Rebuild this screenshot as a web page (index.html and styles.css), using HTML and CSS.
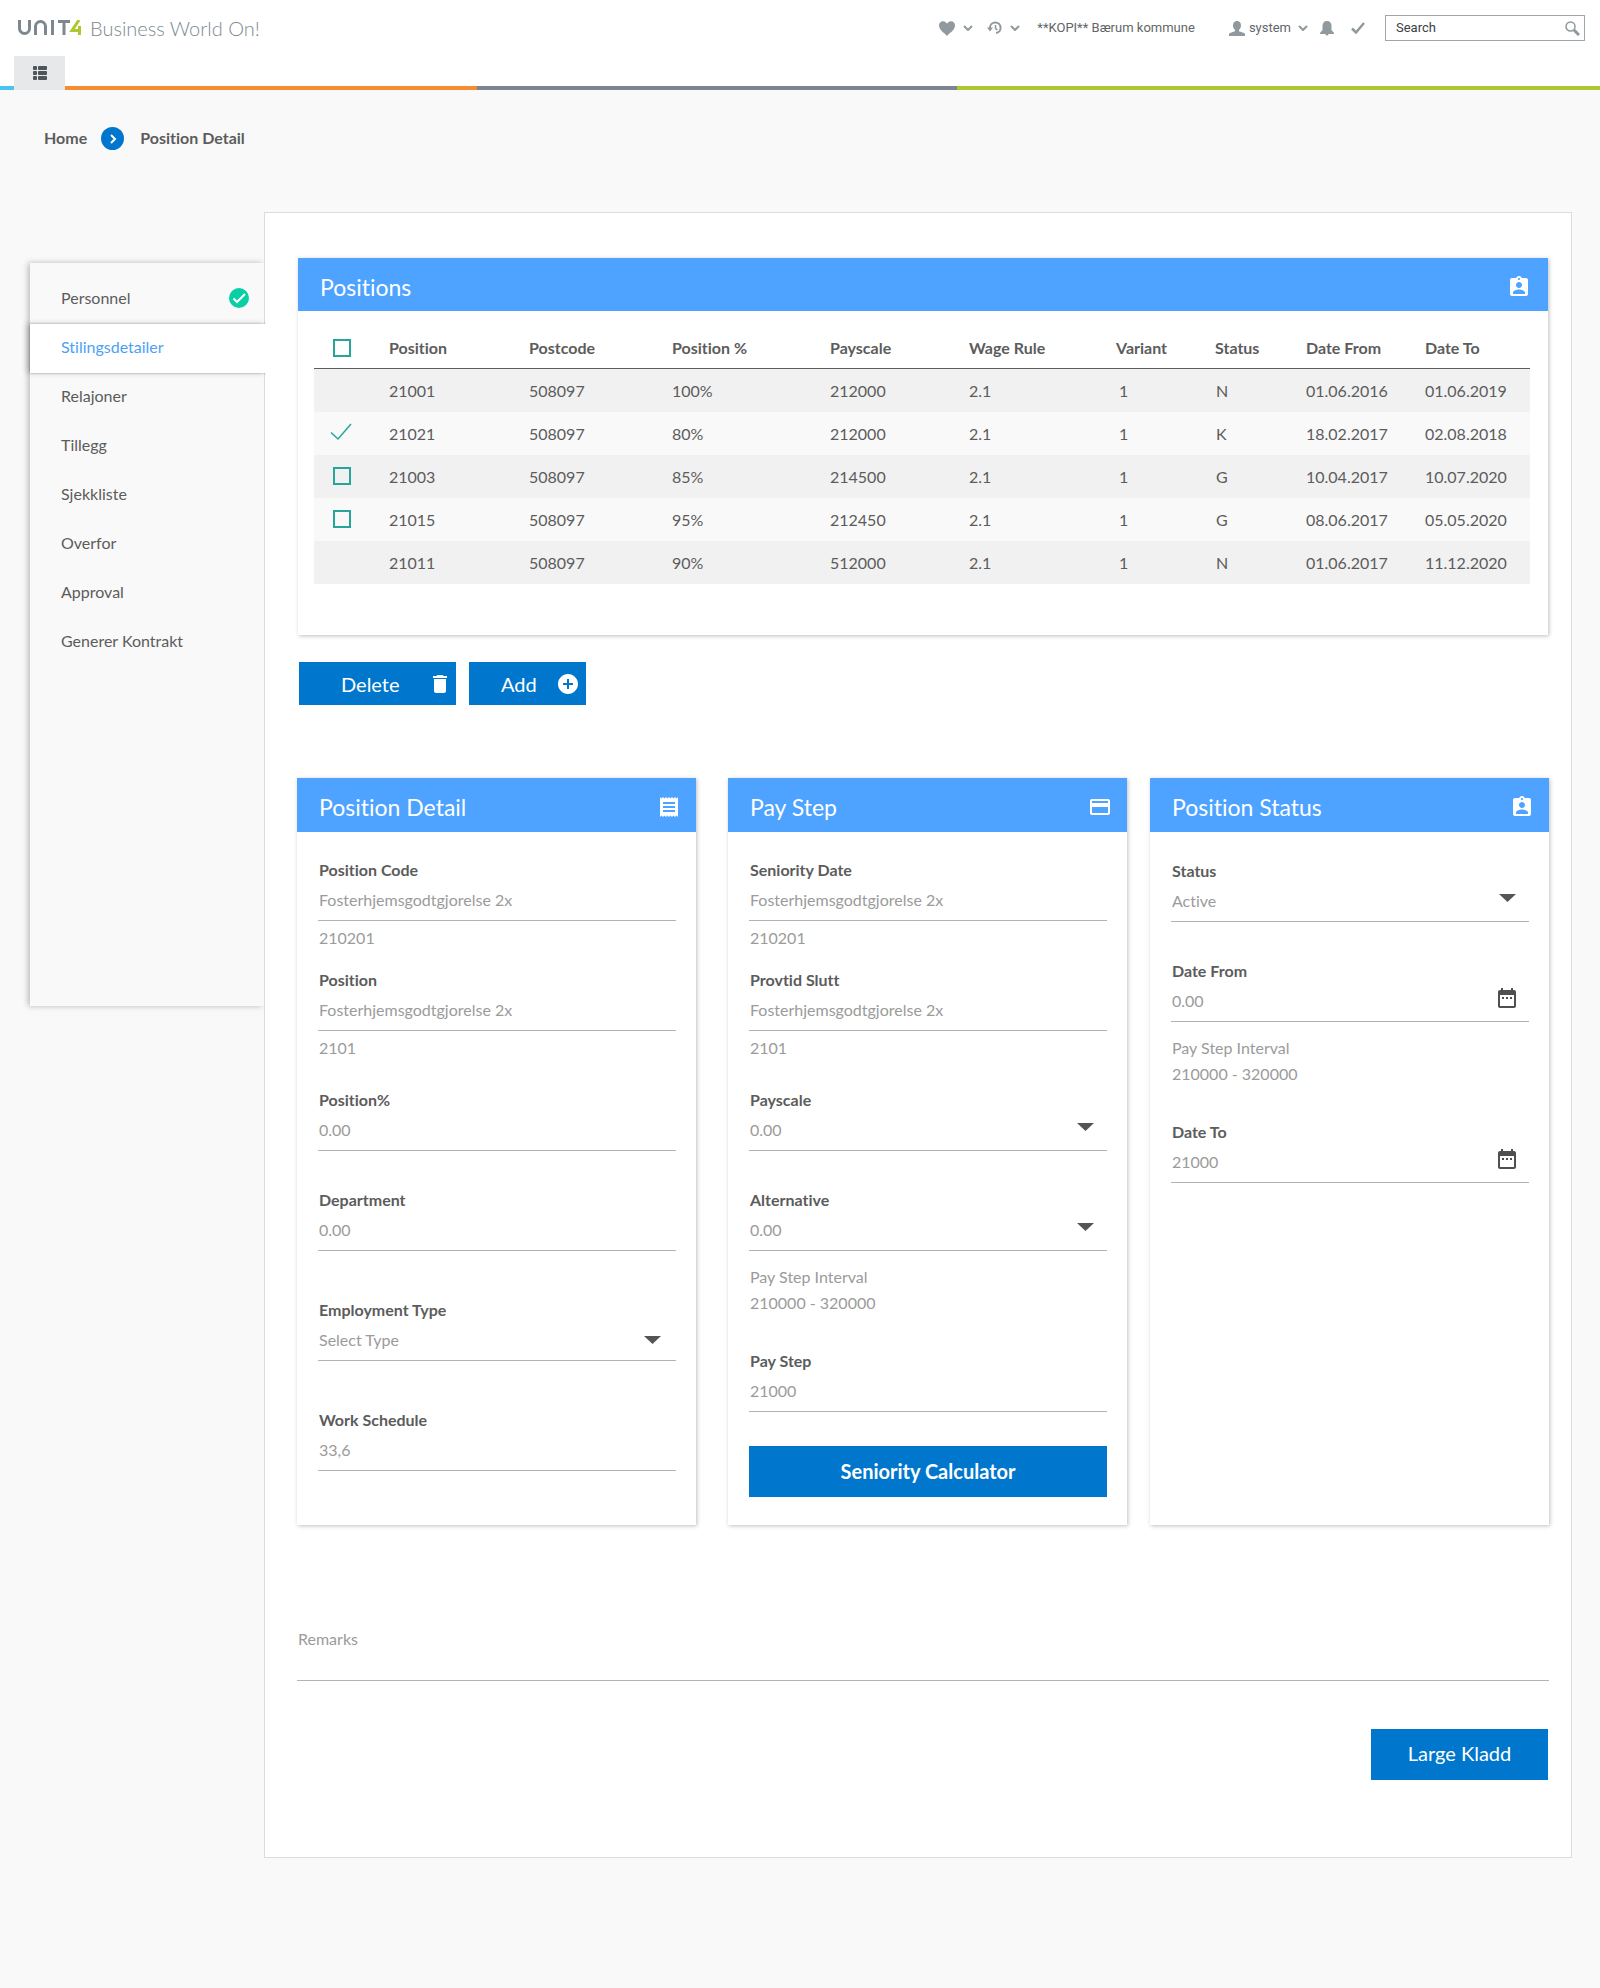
FILE: index.html
```html
<!DOCTYPE html>
<html lang="en">
<head>
<meta charset="utf-8">
<title>Position Detail - Business World On!</title>
<meta name="viewport" content="width=device-width, initial-scale=1">
<link rel="stylesheet" href="styles.css">
</head>
<body>
<svg class="sprite" aria-hidden="true">
  <symbol id="chevron" viewBox="0 0 10 6"><path d="M1 1l4 4 4-4" fill="none" stroke="currentColor" stroke-width="2"/></symbol>
  <symbol id="arrow" viewBox="0 0 17 8"><path d="M0 0h17L8.500 8z" fill="currentColor"/></symbol>
  <symbol id="badge" viewBox="0 0 24 24"><path fill="currentColor" d="M19 3h-4.180C14.400 1.840 13.300 1 12 1c-1.300 0-2.400.84-2.820 2H5c-1.100 0-2 .9-2 2v14c0 1.100.9 2 2 2h14c1.100 0 2-.9 2-2V5c0-1.100-.9-2-2-2zm-7 0c.55 0 1 .45 1 1s-.45 1-1 1-1-.45-1-1 .45-1 1-1zm0 4c1.660 0 3 1.340 3 3s-1.340 3-3 3-3-1.340-3-3 1.340-3 3-3zm6 12H6v-1.400c0-2 4-3.100 6-3.100s6 1.100 6 3.100V19z"/></symbol>
  <symbol id="calendar" viewBox="0 0 24 24"><path fill="currentColor" d="M9 11H7v2h2v-2zm4 0h-2v2h2v-2zm4 0h-2v2h2v-2zm2-7h-1V2h-2v2H8V2H6v2H5c-1.110 0-1.990.9-1.990 2L3 20c0 1.100.89 2 2 2h14c1.100 0 2-.9 2-2V6c0-1.100-.9-2-2-2zm0 16H5V9h14v11z"/></symbol>
</svg>

<header class="topbar">
  <div class="topbar-row">
    <a class="brand" href="#">
      <svg class="brand-mark" viewBox="0 0 64 16" role="img" aria-label="Unit4">
        <g fill="none" stroke="#7d898f" stroke-width="3">
          <path d="M1.500 0v8.500a5 5 0 0 0 10 0V0"/>
          <path d="M17.500 15V6.500a5 5 0 0 1 10 0V15"/>
          <path d="M34.500 0v15"/>
          <path d="M40 1.500h12M46 1.500V15"/>
        </g>
        <path d="M61 0l-7 10.500h8.500M61.500 6v9" fill="none" stroke="#aec62f" stroke-width="3"/>
      </svg>
      <span class="brand-name">Business World On!</span>
    </a>
    <div class="tools">
      <button class="tool" type="button" aria-label="Favourites">
        <svg width="16" height="15" viewBox="0 0 16 15"><path fill="currentColor" d="M8 15C7 13 0 9.500 0 4.500 0 2 1.800.3 4 .3c1.700 0 3.200.9 4 2.400C8.800 1.200 10.300.3 12 .3c2.200 0 4 1.700 4 4.200C16 9.500 9 13 8 15z"/></svg>
        <svg width="10" height="6"><use href="#chevron"/></svg>
      </button>
      <button class="tool tool-history" type="button" aria-label="History">
        <svg width="15" height="14" viewBox="0 0 15 14" fill="none" stroke="currentColor"><path stroke-width="2" d="M3 8V6.500a5.300 5.300 0 1 1 6 5.500"/><path stroke-width="1.500" d="M8.500 4v3.500L10.500 9"/><path fill="currentColor" stroke="none" d="M0 6.500h6L3 10.500z"/></svg>
        <svg width="10" height="6"><use href="#chevron"/></svg>
      </button>
      <span class="client">**KOPI** Bærum kommune</span>
      <button class="tool tool-user" type="button">
        <svg width="16" height="15" viewBox="0 0 16 15"><path fill="currentColor" d="M8 0c2.500 0 4 1.700 4 4.200 0 2-.8 3.800-2 4.700v1.300l5 1.800c.7.300 1 .8 1 1.500V15H0v-1.500c0-.7.300-1.200 1-1.500l5-1.800V8.900C4.800 8 4 6.200 4 4.200 4 1.700 5.500 0 8 0z"/></svg>
        <span>system</span>
        <svg class="user-chevron" width="10" height="6"><use href="#chevron"/></svg>
      </button>
      <button class="tool tool-bell" type="button" aria-label="Notifications">
        <svg width="14" height="15" viewBox="0 0 14 15"><path fill="currentColor" d="M7 0c3 0 4.500 2 4.500 5v4l2.500 3v1H8.500a1.500 1.500 0 0 1-3 0H0v-1l2.500-3V5C2.500 2 4 0 7 0z"/></svg>
      </button>
      <button class="tool tool-check" type="button" aria-label="Tasks">
        <svg width="14" height="12" viewBox="0 0 14 12"><path fill="none" stroke="currentColor" stroke-width="2.500" d="M1 6.500L5 10.500 13 1"/></svg>
      </button>
      <form class="search">
        <input type="search" placeholder="Search" aria-label="Search">
        <button type="submit" aria-label="Run search">
          <svg width="15" height="15" viewBox="0 0 15 15" fill="none" stroke="currentColor"><circle cx="5.500" cy="5.500" r="4.500" stroke-width="1.500"/><path stroke-width="3" d="M9 9l5 5"/></svg>
        </button>
      </form>
    </div>
  </div>
  <div class="tabs">
    <button class="menu-tab" type="button" aria-label="Menu">
      <svg width="14" height="14" viewBox="0 0 14 14" fill="currentColor"><rect width="4" height="4" rx="1"/><rect y="5" width="4" height="4" rx="1"/><rect y="10" width="4" height="4" rx="1"/><rect x="5" width="9" height="4" rx="1"/><rect x="5" y="5" width="9" height="4" rx="1"/><rect x="5" y="10" width="9" height="4" rx="1"/></svg>
    </button>
  </div>
</header>

<nav class="crumbs" aria-label="Breadcrumb">
  <a href="#">Home</a>
  <svg width="23" height="23" viewBox="0 0 23 23" aria-hidden="true"><circle cx="11.500" cy="11.500" r="11.500" fill="#0077cd"/><path d="M10 8l4 4-4 4" fill="none" stroke="#fff" stroke-width="2"/></svg>
  <span aria-current="page">Position Detail</span>
</nav>

<div class="layout">
  <nav class="sidebar" aria-label="Sections">
    <a href="#">Personnel
      <svg width="20" height="20" viewBox="2 2 20 20" role="img" aria-label="Complete"><circle cx="12" cy="12" r="10" fill="#0acfa6"/><path d="M6.500 12.500l3.500 3.500 8-8" fill="none" stroke="#fff" stroke-width="2"/></svg>
    </a>
    <a class="active" href="#" aria-current="true">Stilingsdetailer</a>
    <a href="#">Relajoner</a>
    <a href="#">Tillegg</a>
    <a href="#">Sjekkliste</a>
    <a href="#">Overfor</a>
    <a href="#">Approval</a>
    <a href="#">Generer Kontrakt</a>
  </nav>

  <main class="panel">
    <section class="card overview">
      <header class="card-head">
        <h2>Positions</h2>
        <svg width="24" height="24"><use href="#badge"/></svg>
      </header>
      <div class="table-wrap">
        <table class="positions">
          <colgroup>
            <col class="w-pick"><col class="w-position"><col class="w-postcode"><col class="w-percent"><col class="w-payscale"><col class="w-rule"><col class="w-variant"><col class="w-status"><col class="w-from"><col class="w-to">
          </colgroup>
          <thead>
            <tr><th class="pick"><input type="checkbox" aria-label="Select all"></th><th>Position</th><th>Postcode</th><th>Position %</th><th>Payscale</th><th>Wage Rule</th><th>Variant</th><th>Status</th><th>Date From</th><th>Date To</th></tr>
          </thead>
          <tbody>
            <tr><td></td><td>21001</td><td>508097</td><td>100%</td><td>212000</td><td>2.1</td><td class="variant">1</td><td class="state">N</td><td>01.06.2016</td><td>01.06.2019</td></tr>
            <tr><td class="pick"><input type="checkbox" checked aria-label="Select 21021"></td><td>21021</td><td>508097</td><td>80%</td><td>212000</td><td>2.1</td><td class="variant">1</td><td class="state">K</td><td>18.02.2017</td><td>02.08.2018</td></tr>
            <tr><td class="pick"><input type="checkbox" aria-label="Select 21003"></td><td>21003</td><td>508097</td><td>85%</td><td>214500</td><td>2.1</td><td class="variant">1</td><td class="state">G</td><td>10.04.2017</td><td>10.07.2020</td></tr>
            <tr><td class="pick"><input type="checkbox" aria-label="Select 21015"></td><td>21015</td><td>508097</td><td>95%</td><td>212450</td><td>2.1</td><td class="variant">1</td><td class="state">G</td><td>08.06.2017</td><td>05.05.2020</td></tr>
            <tr><td></td><td>21011</td><td>508097</td><td>90%</td><td>512000</td><td>2.1</td><td class="variant">1</td><td class="state">N</td><td>01.06.2017</td><td>11.12.2020</td></tr>
          </tbody>
        </table>
      </div>
    </section>

    <div class="actions">
      <button class="btn btn-delete" type="button">Delete
        <svg width="14" height="18" viewBox="5 3 14 18"><path fill="currentColor" d="M6 19c0 1.100.9 2 2 2h8c1.100 0 2-.9 2-2V7H6v12zM19 4h-3.500l-1-1h-5l-1 1H5v2h14V4z"/></svg>
      </button>
      <button class="btn btn-add" type="button">Add
        <svg width="20" height="20" viewBox="2 2 20 20"><path fill="currentColor" d="M12 2C6.480 2 2 6.480 2 12s4.480 10 10 10 10-4.480 10-10S17.520 2 12 2zm5 11h-4v4h-2v-4H7v-2h4V7h2v4h4v2z"/></svg>
      </button>
    </div>

    <div class="cards">
      <section class="card detail">
        <header class="card-head">
          <h2>Position Detail</h2>
          <svg width="24" height="24" viewBox="0 0 24 24"><path fill="currentColor" d="M18 17H6v-2h12v2zm0-4H6v-2h12v2zm0-4H6V7h12v2zM3 22l1.500-1.500L6 22l1.500-1.500L9 22l1.500-1.500L12 22l1.500-1.500L15 22l1.500-1.500L18 22l1.500-1.500L21 22V2l-1.500 1.500L18 2l-1.500 1.500L15 2l-1.500 1.500L12 2l-1.500 1.500L9 2 7.500 3.500 6 2 4.500 3.500 3 2v20z"/></svg>
        </header>
        <div class="card-body">
          <div class="field">
            <label for="code">Position Code</label>
            <input id="code" type="text" value="Fosterhjemsgodtgjorelse 2x">
            <p class="hint">210201</p>
          </div>
          <div class="field gap-s">
            <label for="position">Position</label>
            <input id="position" type="text" value="Fosterhjemsgodtgjorelse 2x">
            <p class="hint">2101</p>
          </div>
          <div class="field gap-m">
            <label for="percent">Position%</label>
            <input id="percent" type="text" value="0.00">
          </div>
          <div class="field gap-l">
            <label for="department">Department</label>
            <input id="department" type="text" value="0.00">
          </div>
          <div class="field gap-xl">
            <label for="employment">Employment Type</label>
            <select id="employment"><option>Select Type</option></select>
            <svg class="arrow" width="17" height="8"><use href="#arrow"/></svg>
          </div>
          <div class="field gap-xl">
            <label for="schedule">Work Schedule</label>
            <input id="schedule" type="text" value="33,6">
          </div>
        </div>
      </section>

      <section class="card pay">
        <header class="card-head">
          <h2>Pay Step</h2>
          <svg width="24" height="24" viewBox="0 0 24 24"><path fill="currentColor" d="M20 4H4c-1.110 0-1.990.89-1.990 2L2 18c0 1.110.89 2 2 2h16c1.110 0 2-.89 2-2V6c0-1.110-.89-2-2-2zm0 14H4v-6h16v6zm0-10H4V6h16v2z"/></svg>
        </header>
        <div class="card-body">
          <div class="field">
            <label for="seniority">Seniority Date</label>
            <input id="seniority" type="text" value="Fosterhjemsgodtgjorelse 2x">
            <p class="hint">210201</p>
          </div>
          <div class="field gap-s">
            <label for="provtid">Provtid Slutt</label>
            <input id="provtid" type="text" value="Fosterhjemsgodtgjorelse 2x">
            <p class="hint">2101</p>
          </div>
          <div class="field gap-m">
            <label for="payscale">Payscale</label>
            <select id="payscale"><option>0.00</option></select>
            <svg class="arrow" width="17" height="8"><use href="#arrow"/></svg>
          </div>
          <div class="field gap-l">
            <label for="alternative">Alternative</label>
            <select id="alternative"><option>0.00</option></select>
            <svg class="arrow" width="17" height="8"><use href="#arrow"/></svg>
            <p class="hint range">Pay Step Interval<br>210000 - 320000</p>
          </div>
          <div class="field gap-range">
            <label for="paystep">Pay Step</label>
            <input id="paystep" type="text" value="21000">
          </div>
          <button class="btn btn-wide" type="button">Seniority Calculator</button>
        </div>
      </section>

      <section class="card status">
        <header class="card-head">
          <h2>Position Status</h2>
          <svg width="24" height="24"><use href="#badge"/></svg>
        </header>
        <div class="card-body">
          <div class="field">
            <label for="status">Status</label>
            <select id="status"><option>Active</option></select>
            <svg class="arrow" width="17" height="8"><use href="#arrow"/></svg>
          </div>
          <div class="field gap-l">
            <label for="from">Date From</label>
            <input id="from" type="text" value="0.00">
            <button class="pick-date" type="button" aria-label="Choose start date"><svg width="24" height="24"><use href="#calendar"/></svg></button>
            <p class="hint range">Pay Step Interval<br>210000 - 320000</p>
          </div>
          <div class="field gap-range">
            <label for="to">Date To</label>
            <input id="to" type="text" value="21000">
            <button class="pick-date" type="button" aria-label="Choose end date"><svg width="24" height="24"><use href="#calendar"/></svg></button>
          </div>
        </div>
      </section>
    </div>

    <input class="remarks" type="text" placeholder="Remarks" aria-label="Remarks">
    <div class="submit">
      <button class="btn btn-large" type="button">Large Kladd</button>
    </div>
  </main>
</div>
</body>
</html>
```
FILE: styles.css
```css
* {
  box-sizing: border-box;
}

body {
  margin: 0;
  background: #f9f9f9;
  color: #5c5c5c;
  font: 16px/24px Lato, "Liberation Sans", sans-serif;
  font-variant-ligatures: none;
}

a {
  color: inherit;
  text-decoration: none;
}

button,
input,
select {
  margin: 0;
  padding: 0;
  border: 0;
  border-radius: 0;
  background: none;
  color: inherit;
  font: inherit;
  font-variant-ligatures: none;
}

button {
  cursor: pointer;
}

svg {
  display: block;
  flex: none;
}

.sprite {
  position: absolute;
  width: 0;
  height: 0;
}

/* Top bar */
.topbar {
  background: #fff;
}

.topbar-row {
  display: flex;
  align-items: center;
  justify-content: space-between;
  height: 56px;
  padding: 0 15px 0 18px;
}

.brand {
  display: flex;
  align-items: center;
  gap: 8px;
}

.brand-mark {
  width: 64px;
  height: 16px;
}

.brand-name {
  color: #7d898f;
  font-size: 20px;
  font-weight: 300;
}

.tools {
  display: flex;
  align-items: center;
  color: #8f999e;
  font: 13px/16px Roboto, "Liberation Sans", sans-serif;
}

.tool {
  display: flex;
  align-items: center;
  gap: 8px;
}

.tool span,
.client {
  color: #5f6669;
}

.tool-history {
  margin-left: 14px;
}

.client {
  margin: 0 34px 0 17px;
}

.tool-user {
  gap: 4px;
}

.user-chevron {
  margin-left: 3px;
}

.tool-bell {
  margin-left: 12px;
}

.tool-check {
  margin: 0 20px 0 17px;
}

.search {
  display: flex;
  align-items: center;
  width: 200px;
  height: 26px;
  padding: 0 4px 0 10px;
  border: 1px solid #9da6ab;
}

.search input {
  flex: 1;
  min-width: 0;
  outline: 0;
  appearance: none;
}

.search input::placeholder {
  color: #3c4043;
  opacity: 1;
}

.tabs {
  height: 34px;
  padding-left: 14px;
  background: linear-gradient(90deg, #4bc5ed 4%, #f68c32 4% 29.8%, #7a858f 29.8% 59.8%, #aec62f 59.8%) bottom / 100% 4px no-repeat;
}

.menu-tab {
  display: grid;
  place-items: center;
  width: 51px;
  height: 34px;
  background: #e7e8ea;
  color: #4c565b;
}

/* Breadcrumb */
.crumbs {
  display: flex;
  align-items: center;
  gap: 14px;
  padding: 36px 44px;
  font-weight: 700;
}

.crumbs span {
  padding-left: 2px;
}

/* Page layout */
.layout {
  display: flex;
  align-items: flex-start;
  padding: 26px 28px 130px 30px;
}

.sidebar {
  width: 234px;
  min-height: 743px;
  margin-top: 51px;
  padding-top: 12px;
  box-shadow: -2px 0 6px rgba(0, 0, 0, .25);
}

.sidebar a {
  display: flex;
  align-items: center;
  justify-content: space-between;
  height: 49px;
  padding: 0 15px 4px 31px;
}

.sidebar .active {
  position: relative;
  width: 236px;
  background: #fff;
  box-shadow: -3px 0 6px rgba(0, 0, 0, .2), 0 0 2px rgba(0, 0, 0, .3);
  clip-path: inset(-8px 0 -8px -8px);
  color: #4d9ff5;
}

.panel {
  flex: 1;
  min-width: 0;
  padding: 45px 22px 77px 32px;
  border: 1px solid #dcdcdc;
  background: #fff;
}

/* Cards */
.card {
  background: #fff;
  box-shadow: 1px 1px 4px rgba(0, 0, 0, .25);
}

.card-head {
  display: flex;
  align-items: center;
  justify-content: space-between;
  height: 54px;
  padding: 4px 15px 0 22px;
  background: #4da3ff;
  color: #fff;
}

.card-head h2 {
  margin: 0;
  font-size: 23px;
  font-weight: 400;
  line-height: 32px;
}

.overview {
  margin: 0 1px;
}

.overview .card-head {
  height: 53px;
  padding-right: 17px;
}

.table-wrap {
  padding: 14px 18px 51px 16px;
}

.positions {
  width: 100%;
  border-spacing: 0;
  table-layout: fixed;
}

.w-pick { width: 75px; }
.w-position { width: 140px; }
.w-postcode { width: 143px; }
.w-percent { width: 158px; }
.w-payscale { width: 139px; }
.w-rule { width: 147px; }
.w-variant { width: 99px; }
.w-status { width: 91px; }
.w-from { width: 119px; }
.w-to { width: 105px; }

.positions th,
.positions td {
  height: 43px;
  padding: 0;
  text-align: left;
}

.positions th {
  height: 44px;
  padding-top: 2px;
  border-bottom: 1px solid #5c5c5c;
}

.positions tbody tr {
  background: #f9f9f9;
}

.positions tbody tr:nth-child(odd) {
  background: #f1f1f1;
}

.positions .pick {
  padding-left: 19px;
}

.positions .variant {
  padding-left: 3px;
}

.positions .state {
  padding-left: 1px;
}

.positions input {
  display: block;
  width: 18px;
  height: 18px;
  border: 2px solid #26a69a;
  appearance: none;
}

.positions td input {
  margin-bottom: 2px;
}

.positions input:checked {
  width: 22px;
  margin: 0 0 3px -3px;
  border: 0;
  background: url("data:image/svg+xml,%3Csvg xmlns='http://www.w3.org/2000/svg' viewBox='0 0 22 18'%3E%3Cpath d='M1 9.500L8 16 21 1' fill='none' stroke='%2326a69a' stroke-width='1.500'/%3E%3C/svg%3E") center / 22px 18px no-repeat;
}

/* Buttons */
.btn {
  display: flex;
  align-items: center;
  justify-content: center;
  height: 51px;
  background: #0077cd;
  color: #fff;
  font-size: 20px;
  line-height: 24px;
}

.actions {
  display: flex;
  gap: 13px;
  margin: 27px 0 73px 2px;
}

.btn-delete,
.btn-add {
  justify-content: space-between;
  height: 43px;
}

.btn-delete {
  width: 157px;
  padding: 0 9px 0 42px;
}

.btn-add {
  width: 117px;
  padding: 0 8px 0 32px;
}

.btn-wide {
  width: 100%;
  margin-top: 34px;
  padding-bottom: 2px;
  font-weight: 700;
}

.btn-large {
  width: 177px;
  padding-bottom: 3px;
}

/* Detail cards */
.cards {
  display: flex;
}

.cards .card {
  flex: 1;
  min-width: 0;
}

.cards .pay {
  margin: 0 23px 0 32px;
}

.card-body {
  padding: 26px 20px 28px 21px;
}

.status .card-body {
  padding-top: 27px;
}

.field {
  position: relative;
}

.gap-s { margin-top: 17px; }
.gap-m { margin-top: 27px; }
.gap-range { margin-top: 33px; }
.gap-l { margin-top: 37px; }
.gap-xl { margin-top: 47px; }

.field label {
  display: block;
  padding-left: 1px;
  font-weight: 700;
}

.field input,
.field select {
  display: block;
  width: 100%;
  height: 39px;
  padding: 0 48px 4px 1px;
  border-bottom: 1px solid #b3b3b3;
  color: #9b9b9b;
  appearance: none;
}

.field select {
  padding-bottom: 2px;
}

.hint {
  margin: 4px 0 0;
  padding-left: 1px;
  color: #9b9b9b;
  line-height: 26px;
}

.range {
  margin-top: 13px;
}

.arrow {
  position: absolute;
  top: 35px;
  right: 13px;
  color: #555;
  pointer-events: none;
}

.detail .arrow {
  top: 38px;
  right: 15px;
}

.pick-date {
  position: absolute;
  top: 27px;
  right: 10px;
  color: #4f4f4f;
}

/* Footer of the form */
.remarks {
  display: block;
  width: 100%;
  height: 80px;
  margin-top: 76px;
  padding: 0 0 4px 1px;
  border-bottom: 1px solid #b3b3b3;
}

.remarks::placeholder {
  color: #9b9b9b;
  opacity: 1;
}

.submit {
  display: flex;
  justify-content: flex-end;
  margin: 48px 1px 0 0;
}
```
